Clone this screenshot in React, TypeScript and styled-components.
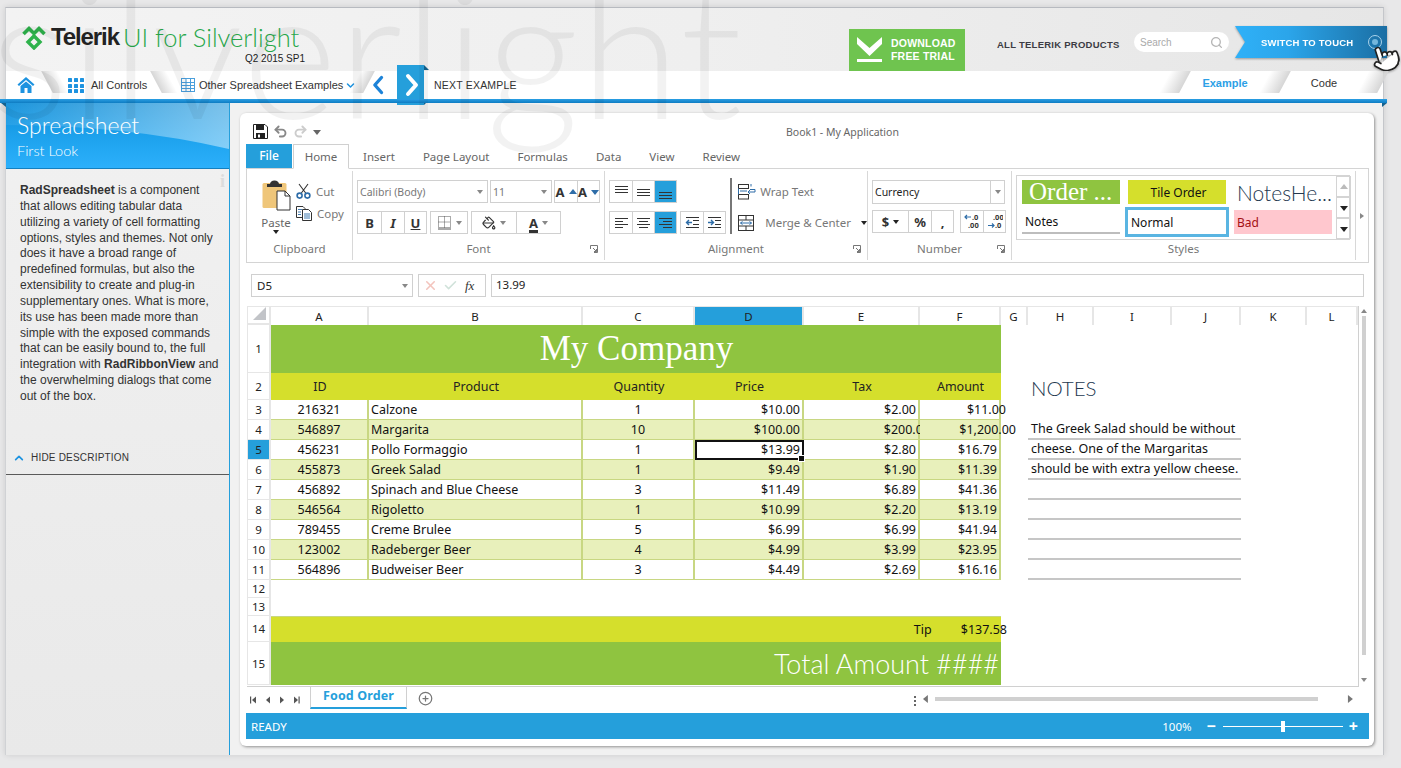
import React from 'react';
import styled, { createGlobalStyle } from 'styled-components';
import { Check, CirclePlus, PaintBucket, Pointer, Redo2, Search, Undo2, X } from 'lucide-react';

const UI_FONT = '"Noto Sans", "Open Sans", sans-serif';
const WEB_FONT = '"Liberation Sans", Arial, sans-serif';
const LIGHT_FONT = 'Lato, "Open Sans", sans-serif';
const BLUE = '#259fdb';

const GlobalStyle = createGlobalStyle`
  html, body {
    margin: 0;
    padding: 0;
    background: #e8e8e9;
  }
  * {
    box-sizing: border-box;
  }
`;

const Page = styled.div`
  position: relative;
  width: 1401px;
  height: 768px;
  overflow: hidden;
  padding: 7px 0 0 5px;
  font-family: ${UI_FONT};
  background: #e8e8e9;
`;

const Watermark = styled.div`
  position: absolute;
  left: -9px;
  top: -60px;
  font-family: ${LIGHT_FONT};
  font-weight: 300;
  font-size: 182px;
  line-height: 1.2;
  letter-spacing: 1px;
  white-space: nowrap;
  color: rgba(0, 0, 0, 0.05);
  pointer-events: none;
  z-index: 5;
`;

const Frame = styled.div`
  width: 1379px;
  height: 748px;
  border-top: 1px solid #b7bac0;
  border-right: 1px solid #c4c6ca;
  border-left: 1px solid #d0d2d5;
  background: #f1f1f1;
  box-shadow: 0 0 6px rgba(0, 0, 0, 0.12);
`;

/* ---- top header ---- */

const Header = styled.header`
  display: flex;
  align-items: flex-start;
  height: 63px;
  background: linear-gradient(90deg, #f3f3f3 0%, #efefef 50%, #e6e6e6 100%);
`;

const LogoBlock = styled.div`
  display: flex;
  flex-direction: column;
  align-items: flex-end;
  width: 283px;
  margin: 14px 0 0 16px;
`;

const LogoRow = styled.div`
  display: flex;
  align-items: center;
  height: 30px;
  width: 100%;
`;

const LogoMark = styled.svg`
  width: 24px;
  height: 25px;
  flex: none;
`;

const LogoStrong = styled.span`
  margin-left: 5px;
  font-family: ${WEB_FONT};
  font-weight: 700;
  font-size: 24px;
  letter-spacing: -1.1px;
  color: #222;
`;

const LogoLight = styled.span`
  margin-left: 4px;
  font-family: ${LIGHT_FONT};
  font-weight: 300;
  font-size: 25.5px;
  white-space: nowrap;
  color: #27a84a;
`;

const Version = styled.div`
  font-family: ${WEB_FONT};
  font-size: 10px;
  line-height: 12px;
  margin-top: 1px;
  color: #222;
`;

const HeaderRight = styled.div`
  display: flex;
  align-items: flex-start;
  margin-left: auto;
  margin-right: -4px;
`;

const Download = styled.div`
  display: flex;
  align-items: center;
  gap: 9px;
  width: 116px;
  height: 42px;
  margin-top: 21px;
  padding-left: 8px;
  background: #6fc44f;
  font-family: ${WEB_FONT};
  font-weight: 700;
  font-size: 10.5px;
  line-height: 13px;
  letter-spacing: 0.2px;
  color: #fff;
`;

const ProductsLink = styled.div`
  width: 137px;
  margin: 30px 0 0 32px;
  font-family: ${WEB_FONT};
  font-weight: 700;
  font-size: 9.5px;
  line-height: 13px;
  letter-spacing: 0.25px;
  white-space: nowrap;
  color: #3c3c44;
`;

const SearchBox = styled.div`
  display: flex;
  align-items: center;
  justify-content: space-between;
  width: 95px;
  height: 20px;
  margin-top: 24px;
  padding: 0 6px;
  border-radius: 10px;
  background: #fff;
  font-family: ${WEB_FONT};
  font-size: 10px;
  color: #aaa;
`;

const TouchWrap = styled.div`
  position: relative;
  width: 152px;
  height: 32px;
  margin: 18px 0 0 6px;
  filter: drop-shadow(0 1px 1px rgba(0, 0, 0, 0.35));
`;

const TouchRibbon = styled.div`
  display: flex;
  align-items: center;
  height: 100%;
  padding-left: 26px;
  clip-path: polygon(0 0, 100% 0, 100% 100%, 0 100%, 10px 50%);
  background: linear-gradient(90deg, #2fb1f8 0%, #2ba5ea 35%, #1b6ea3 100%);
  font-family: ${WEB_FONT};
  font-weight: 700;
  font-size: 9.5px;
  letter-spacing: 0.2px;
  color: #fff;
`;

const TouchRing = styled.span`
  position: absolute;
  right: 5px;
  top: 9px;
  width: 14px;
  height: 14px;
  border: 1px solid #a9d2ea;
  border-radius: 50%;
  &::after {
    content: '';
    position: absolute;
    inset: 3px;
    border-radius: 50%;
    background: #74b6dc;
  }
`;

const TouchHand = styled.span`
  position: absolute;
  left: 136px;
  top: 17px;
  transform: rotate(-18deg);
  display: block;
  height: 32px;
`;

/* ---- navigation ---- */

const NavBar = styled.nav`
  display: flex;
  align-items: center;
  height: 28px;
  background: #fff;
`;

const Slant = styled.span<{ $reverse?: boolean; $w?: number }>`
  flex: none;
  width: ${(p) => p.$w ?? 16}px;
  height: 22px;
  align-self: flex-start;
  transform: skewX(${(p) => (p.$reverse ? -28 : 28)}deg);
  background: linear-gradient(
    ${(p) => (p.$reverse ? '270deg' : '90deg')},
    #d6d6d6 0%,
    rgba(255, 255, 255, 0) 100%
  );
`;

const NavItem = styled.div<{ $w: number; $ml?: number }>`
  display: flex;
  align-items: center;
  flex: none;
  gap: 7px;
  width: ${(p) => p.$w}px;
  margin-left: ${(p) => p.$ml ?? 0}px;
  font-family: ${WEB_FONT};
  font-size: 11px;
  white-space: nowrap;
  color: #333;
`;

const NextButton = styled.div`
  position: relative;
  display: flex;
  align-items: center;
  justify-content: center;
  flex: none;
  width: 27px;
  height: 40px;
  margin: 0 0 0 8px;
  background: ${BLUE};
  &::before,
  &::after {
    content: '';
    position: absolute;
    right: -5px;
    width: 0;
    height: 0;
    border-left: 5px solid #14628f;
  }
  &::before {
    top: 0;
    border-top: 5px solid transparent;
  }
  &::after {
    bottom: 0;
    border-bottom: 5px solid transparent;
  }
`;

const NextLabel = styled.span`
  margin-left: 10px;
  font-family: ${WEB_FONT};
  font-size: 10.5px;
  letter-spacing: 0.2px;
  color: #333;
`;

const ViewTabs = styled.div`
  display: flex;
  align-items: flex-start;
  margin-left: auto;
  align-self: stretch;
`;

const ViewTab = styled.div<{ $active?: boolean; $w: number }>`
  width: ${(p) => p.$w}px;
  height: 24px;
  text-align: center;
  font-family: ${WEB_FONT};
  font-size: 11px;
  line-height: 24px;
  font-weight: ${(p) => (p.$active ? 700 : 400)};
  color: ${(p) => (p.$active ? '#2c9fe6' : '#333')};
`;

const BlueLine = styled.div`
  position: relative;
  height: 4px;
  margin: 0 -4px 0 -6px;
  background: linear-gradient(180deg, #2a9fe4 0%, #0e7cc2 100%);
  &::before,
  &::after {
    content: '';
    position: absolute;
    top: 4px;
    width: 0;
    height: 0;
    border-top: 4px solid #14628f;
  }
  &::before {
    left: 1px;
    border-left: 5px solid transparent;
  }
  &::after {
    right: 0;
    border-right: 5px solid transparent;
  }
`;

/* ---- body ---- */

const Body = styled.div`
  display: flex;
  height: 652px;
`;

const Sidebar = styled.aside`
  flex: none;
  width: 224px;
  border-right: 1px solid ${BLUE};
  background: linear-gradient(180deg, #f1f1f1 0%, #e9e9e9 100%);
`;

const SideHead = styled.div`
  position: relative;
  height: 66px;
  padding: 8px 0 0 11px;
  overflow: hidden;
  border-bottom: 1px solid #1480c0;
  background: linear-gradient(180deg, #0f8ed8 0%, #1ea3ee 55%, #2cb0fb 100%);
  color: #fff;
  font-family: ${LIGHT_FONT};
  font-weight: 300;
`;

const SideSwoosh = styled.svg`
  position: absolute;
  left: 0;
  top: 0;
  width: 223px;
  height: 66px;
`;

const SideTitle = styled.div`
  position: relative;
  font-size: 23px;
  line-height: 28px;
`;

const SideSub = styled.div`
  position: relative;
  font-size: 14.5px;
  line-height: 24px;
`;

const SideText = styled.div`
  position: relative;
  width: 201px;
  padding: 14px 0 0 14px;
  font-family: ${WEB_FONT};
  font-size: 12px;
  line-height: 15.85px;
  color: #333;
  height: 260px;
  box-sizing: content-box;
  b {
    color: #333;
  }
`;

const InfoMark = styled.span`
  position: absolute;
  right: -4px;
  top: 5px;
  font-family: "Liberation Serif", serif;
  font-weight: 700;
  font-size: 18px;
  color: #dcdcdc;
`;

const HideRow = styled.div`
  display: flex;
  align-items: center;
  gap: 7px;
  height: 24px;
  padding: 0 0 10px 8px;
  margin-top: 8px;
  border-bottom: 1px solid #5a5a5a;
  font-family: ${WEB_FONT};
  font-size: 10px;
  letter-spacing: 0.2px;
  color: #333;
`;

const Main = styled.main`
  flex: 1;
  padding: 10px 10px 9px;
`;

const Card = styled.div`
  display: flex;
  flex-direction: column;
  width: 1134px;
  height: 633px;
  padding: 0 5px 6px 6px;
  border-radius: 6px;
  background: #fff;
  box-shadow: 1px 1px 3px rgba(0, 0, 0, 0.4);
`;

const TitleRow = styled.div`
  display: flex;
  align-items: center;
  flex: none;
  height: 31px;
  padding: 6px 0 0 7px;
  gap: 5px;
`;

const DocTitle = styled.div`
  margin-left: 460px;
  font-size: 10.5px;
  color: #666;
`;

const Tabs = styled.div`
  display: flex;
  flex: none;
  height: 24px;
`;

const FileTab = styled.div`
  width: 46px;
  margin-right: 1px;
  text-align: center;
  font-size: 12px;
  font-weight: 500;
  line-height: 24px;
  background: ${BLUE};
  color: #fff;
`;

const Tab = styled.div<{ $active?: boolean }>`
  padding: 0 ${(p) => (p.$active ? 10 : 13)}px;
  width: ${(p) => (p.$active ? '56px' : 'auto')};
  font-size: 11.5px;
  line-height: 24px;
  text-align: center;
  white-space: nowrap;
  color: #666;
  border: 1px solid ${(p) => (p.$active ? '#d0d0d0' : 'transparent')};
  border-bottom-color: ${(p) => (p.$active ? '#fff' : 'transparent')};
  height: 25px;
  position: relative;
  z-index: 1;
  padding-top: 0;
`;

const Ribbon = styled.div`
  display: flex;
  flex: none;
  height: 95px;
  border: 1px solid #d4d4d4;
`;

const Group = styled.section<{ $w: number; $last?: boolean }>`
  position: relative;
  display: flex;
  flex-direction: column;
  flex: none;
  width: ${(p) => p.$w}px;
  margin: 2px 0;
  border-right: ${(p) => (p.$last ? 'none' : '1px solid #d8d8d8')};
`;

const GroupBody = styled.div<{ $pl?: number }>`
  display: flex;
  flex: 1;
  padding: 9px 0 0 ${(p) => p.$pl ?? 4}px;
`;

const GroupLabel = styled.div`
  height: 20px;
  text-align: center;
  font-size: 11.5px;
  line-height: 17px;
  color: #777;
`;

const Launcher = styled.svg`
  position: absolute;
  right: 6px;
  bottom: 7px;
  width: 8px;
  height: 8px;
`;

const Stack = styled.div<{ $gap?: number; $w?: number }>`
  display: flex;
  flex-direction: column;
  gap: ${(p) => p.$gap ?? 8}px;
  ${(p) => (p.$w ? `width: ${p.$w}px;` : '')}
`;

const ToolRow = styled.div<{ $gap?: number }>`
  display: flex;
  align-items: flex-start;
  gap: ${(p) => p.$gap ?? 3}px;
`;

const PasteBlock = styled.div`
  display: flex;
  flex-direction: column;
  align-items: center;
  width: 40px;
  margin-left: 4px;
  font-size: 11.5px;
  line-height: 14px;
  color: #666;
`;

const SmallAction = styled.div`
  display: flex;
  align-items: center;
  gap: 5px;
  height: 22px;
  font-size: 11.5px;
  color: #777;
`;

const Combo = styled.div<{ $w: number; $h?: number; $dark?: boolean }>`
  display: flex;
  align-items: center;
  justify-content: space-between;
  width: ${(p) => p.$w}px;
  height: ${(p) => p.$h ?? 23}px;
  padding-left: ${(p) => (p.$dark ? 2 : 2)}px;
  border: 1px solid #d0d0d0;
  font-size: 10.5px;
  color: ${(p) => (p.$dark ? '#222' : '#777')};
  white-space: nowrap;
`;

const ComboArrow = styled.span<{ $sep?: boolean }>`
  display: flex;
  align-items: center;
  justify-content: center;
  align-self: stretch;
  width: 14px;
  ${(p) => (p.$sep ? 'border-left: 1px solid #d0d0d0;' : '')}
  &::after {
    content: '';
    border-left: 3px solid transparent;
    border-right: 3px solid transparent;
    border-top: 4px solid #888;
  }
`;

const ToolGroup = styled.div`
  display: flex;
  height: 23px;
  border: 1px solid #d0d0d0;
`;

const ToolBtn = styled.div<{ $w?: number; $active?: boolean }>`
  display: flex;
  align-items: center;
  justify-content: center;
  gap: 4px;
  width: ${(p) => p.$w ?? 22}px;
  font-size: 13px;
  font-weight: 700;
  color: #333;
  background: ${(p) => (p.$active ? BLUE : 'transparent')};
  & + & {
    border-left: 1px solid #d0d0d0;
  }
`;

const Caret = styled.span<{ $color?: string }>`
  flex: none;
  border-left: 3px solid transparent;
  border-right: 3px solid transparent;
  border-top: 4px solid ${(p) => p.$color ?? '#888'};
`;

const VDivider = styled.div`
  width: 2px;
  height: 56px;
  margin: -2px 6px 0 4px;
  background: #777;
`;

const ActionRow = styled.div`
  display: flex;
  align-items: center;
  height: 23px;
  font-size: 11.5px;
  color: #777;
  white-space: nowrap;
`;

const Gallery = styled.div`
  display: flex;
  width: 334px;
  height: 65px;
  margin-top: -5px;
  border: 1px solid #d4d4d4;
`;

const GalleryGrid = styled.div`
  display: grid;
  grid-template-columns: 98px 98px 98px;
  grid-template-rows: 24px 24px;
  column-gap: 8px;
  row-gap: 6px;
  width: 319px;
  padding: 4px 0 0 5px;
`;

const StyleItem = styled.div<{ $kind: string }>`
  position: relative;
  display: flex;
  align-items: center;
  overflow: visible;
  padding-left: 3px;
  font-size: 12px;
  white-space: nowrap;
  color: #111;
  ${(p) =>
    p.$kind === 'order' &&
    `background:#8fc440;color:#fff;font-family:"Liberation Serif",serif;font-size:25px;padding-left:7px;`}
  ${(p) => p.$kind === 'tile' && `background:#d5df2c;justify-content:center;`}
  ${(p) => p.$kind === 'head' && `font-family:${LIGHT_FONT};font-size:21px;font-weight:300;color:#24384f;`}
  ${(p) => p.$kind === 'notes' && `border-bottom:2px solid #bdbdbd;`}
  ${(p) => p.$kind === 'normal' && `outline:3px solid #5ab5e2;outline-offset:0;`}
  ${(p) => p.$kind === 'bad' && `background:#ffc7ce;color:#a50f15;`}
`;

const GalleryScroll = styled.div`
  display: flex;
  flex-direction: column;
  width: 15px;
  flex: none;
  margin-left: 4px;
`;

const GalleryBtn = styled.div`
  flex: 1;
  display: flex;
  align-items: center;
  justify-content: center;
  border: 1px solid #d4d4d4;
`;

const RibbonEdge = styled.div`
  flex: 1;
  display: flex;
  align-items: center;
  justify-content: center;
  &::after {
    content: '';
    border-top: 3px solid transparent;
    border-bottom: 3px solid transparent;
    border-left: 4px solid #888;
  }
`;

const FormulaBar = styled.div`
  display: flex;
  flex: none;
  gap: 5px;
  height: 23px;
  margin: 11px 5px 9px;
`;

const NameBox = styled.div`
  display: flex;
  align-items: center;
  justify-content: space-between;
  width: 162px;
  padding-left: 5px;
  border: 1px solid #d0d0d0;
  font-size: 11.5px;
  color: #222;
`;

const FormulaBtns = styled.div`
  display: flex;
  align-items: center;
  gap: 5px;
  width: 68px;
  padding-left: 4px;
  border: 1px solid #d0d0d0;
`;

const FxMark = styled.span`
  margin-left: 2px;
  font-family: "Liberation Serif", serif;
  font-style: italic;
  font-size: 13px;
  color: #333;
`;

const FormulaInput = styled.div`
  flex: 1;
  padding-left: 4px;
  border: 1px solid #d0d0d0;
  font-size: 11.5px;
  line-height: 20px;
  color: #222;
`;

/* ---- sheet ---- */

const SheetRow = styled.div`
  display: flex;
  flex: none;
  height: 381px;
`;

const Sheet = styled.div`
  display: grid;
  grid-template-columns: 24px 98px 214px 112px 109px 116px 81px 27px 66px 78px 69px 66px 51px;
  grid-template-rows: 19px 48px 27px repeat(9, 20px) 18px 18px 26px 43px 2px;
  flex: none;
  width: 1112px;
  height: 381px;
  margin-left: 1px;
  border-right: 1px solid #d0d0d0;
  border-bottom: 1px solid #d0d0d0;
  font-size: 12.5px;
  color: #111;
`;

const Corner = styled.div`
  display: flex;
  align-items: flex-end;
  justify-content: flex-end;
  padding: 0 3px 3px 0;
  border-right: 2px solid #e6e6e6;
  border-bottom: 2px solid #e6e6e6;
  border-top: 1px solid #e6e6e6;
  border-left: 1px solid #e6e6e6;
  &::after {
    content: '';
    border-left: 13px solid transparent;
    border-bottom: 13px solid #c2c4c8;
  }
`;

const ColHead = styled.div<{ $active?: boolean }>`
  display: flex;
  align-items: center;
  justify-content: center;
  border-top: 1px solid #e6e6e6;
  border-right: 2px solid #e6e6e6;
  font-size: 11.5px;
  color: #222;
  background: ${(p) => (p.$active ? BLUE : '#fff')};
`;

const RowHead = styled.div<{ $active?: boolean }>`
  grid-column: 1;
  display: flex;
  align-items: center;
  justify-content: center;
  border-left: 1px solid #e6e6e6;
  border-right: 2px solid #e6e6e6;
  border-bottom: 1px solid #e6e6e6;
  font-size: 11.5px;
  color: #222;
  background: ${(p) => (p.$active ? BLUE : '#fff')};
`;

const Banner = styled.div`
  grid-column: 2 / span 6;
  display: flex;
  align-items: center;
  justify-content: center;
  padding-left: 1px;
  font-family: "Liberation Serif", serif;
  font-size: 35px;
  color: #fff;
  background: #8fc440;
`;

const TitleCell = styled.div`
  display: flex;
  align-items: center;
  justify-content: center;
  background: #d5df2c;
  color: #222;
`;

type CellProps = {
  $align: 'left' | 'center' | 'right';
  $alt?: boolean;
  $over?: number;
  $selected?: boolean;
};

const Cell = styled.div<CellProps>`
  position: relative;
  display: flex;
  align-items: flex-end;
  justify-content: ${(p) =>
    p.$align === 'left' ? 'flex-start' : p.$align === 'right' ? 'flex-end' : 'center'};
  padding: 0 2px 0 2px;
  border-right: 2px solid #c8d782;
  border-bottom: 1px solid #c8d782;
  line-height: 19px;
  white-space: nowrap;
  background: ${(p) => (p.$alt ? '#e8f0bb' : '#fff')};
  ${(p) => (p.$over ? 'z-index: 2;' : '')}
  ${(p) =>
    p.$selected
      ? `outline: 2px solid #111; outline-offset: -2px; z-index: 3;
         &::after { content: ''; position: absolute; right: -3px; bottom: -3px;
         width: 5px; height: 5px; background: #111; border: 1px solid #fff; }`
      : ''}
`;

const CellText = styled.span<{ $over?: number }>`
  margin-right: ${(p) => -(p.$over ?? 0)}px;
`;

const TipBand = styled.div`
  grid-column: 2 / span 6;
  display: flex;
  align-items: center;
  justify-content: flex-end;
  gap: 29px;
  background: #d5df2c;
  border-top: 1px solid #c8d782;
  white-space: nowrap;
`;

const TipAmount = styled.span`
  margin-right: -6px;
`;

const TotalBand = styled.div`
  grid-column: 2 / span 6;
  display: flex;
  align-items: center;
  justify-content: flex-end;
  padding-right: 2px;
  font-family: ${LIGHT_FONT};
  font-weight: 300;
  font-size: 27px;
  color: #fff;
  background: #8fc440;
`;

const Notes = styled.div`
  grid-column: 9 / span 3;
  grid-row: 3 / 13;
  display: flex;
  flex-direction: column;
`;

const NotesTitle = styled.div`
  height: 47px;
  padding: 0 0 0 3px;
  font-family: ${LIGHT_FONT};
  font-weight: 300;
  font-size: 20.5px;
  line-height: 30px;
  color: #24384f;
`;

const NoteLine = styled.div`
  height: 20px;
  padding-left: 3px;
  border-bottom: 2px solid #c6c6c6;
  line-height: 18px;
  white-space: nowrap;
`;

const VScroll = styled.div`
  position: relative;
  display: flex;
  justify-content: center;
  width: 11px;
  padding-top: 10px;
`;

const VThumb = styled.div`
  width: 4px;
  height: 339px;
  background: #d0d0d0;
`;

const TriangleAt = styled.span<{ $place: 'top' | 'bottom' }>`
  position: absolute;
  left: 2px;
  ${(p) => (p.$place === 'top' ? 'top: 3px;' : 'bottom: 5px;')}
  border-left: 3px solid transparent;
  border-right: 3px solid transparent;
  ${(p) =>
    p.$place === 'top' ? 'border-bottom: 4px solid #888;' : 'border-top: 4px solid #888;'}
`;

const SheetBar = styled.div`
  display: flex;
  align-items: flex-start;
  flex: none;
  height: 26px;
`;

const SheetNav = styled.div`
  display: flex;
  align-items: center;
  justify-content: space-between;
  width: 58px;
  height: 25px;
  padding: 0 4px 0 4px;
  margin-top: 0;
`;

const SheetTab = styled.div`
  width: 97px;
  height: 23px;
  margin: -1px 0 0 6px;
  border: 1px solid #d0d0d0;
  border-top: none;
  border-bottom: 2px solid ${BLUE};
  text-align: center;
  font-size: 12.5px;
  font-weight: 700;
  line-height: 20px;
  letter-spacing: 0.1px;
  color: ${BLUE};
`;

const AddSheet = styled.div`
  display: flex;
  align-items: center;
  height: 22px;
  margin-left: 11px;
`;

const Dots = styled.div`
  display: flex;
  flex-direction: column;
  gap: 2px;
  margin: 9px 0 0 481px;
  span {
    width: 2px;
    height: 2px;
    background: #666;
  }
`;

const HScroll = styled.div`
  display: flex;
  align-items: center;
  width: 432px;
  height: 24px;
  margin-left: 6px;
`;

const HThumb = styled.div`
  width: 392px;
  height: 4px;
  margin: 0 28px 0 5px;
  background: #d0d0d0;
`;

const StatusBar = styled.footer`
  display: flex;
  align-items: center;
  flex: none;
  height: 26px;
  padding: 0 11px 0 5px;
  background: ${BLUE};
  font-size: 11.5px;
  color: #fff;
`;

const ZoomLabel = styled.span`
  margin-left: auto;
  margin-right: 15px;
`;

const ZoomGlyph = styled.span`
  font-size: 16px;
  font-weight: 700;
  line-height: 16px;
`;

const ZoomTrack = styled.div`
  position: relative;
  width: 120px;
  height: 1px;
  margin: 0 6px 0 7px;
  background: #fff;
`;

const ZoomThumb = styled.span`
  position: absolute;
  left: 58px;
  top: -5px;
  width: 4px;
  height: 11px;
  background: #fff;
`;

/* ---- drawings ---- */

const Chevron = ({ dir, color, size = 18, w = 3.4 }: { dir: 'l' | 'r' | 'u' | 'd'; color: string; size?: number; w?: number }) => {
  const pts = { l: '15,3 7,12 15,21', r: '9,3 17,12 9,21', u: '4,16 12,8 20,16', d: '4,8 12,16 20,8' }[dir];
  return (
    <svg width={size} height={size} viewBox="0 0 24 24">
      <polyline points={pts} fill="none" stroke={color} strokeWidth={w} strokeLinecap="round" strokeLinejoin="round" />
    </svg>
  );
};

const TelerikMark = () => (
  <LogoMark viewBox="0 0 24 25">
    <polyline points="1.5,9 7,3.5 12,8.5 17,3.5 22.5,9" fill="none" stroke="#2eb24b" strokeWidth="3.6" />
    <polygon points="12,11 18,17 12,23 6,17" fill="none" stroke="#2eb24b" strokeWidth="3.4" />
  </LogoMark>
);

const HomeIcon = () => (
  <svg width="18" height="18" viewBox="0 0 18 18">
    <path d="M9 1 L0.5 8.5 L2 10 L9 4 L16 10 L17.5 8.5 Z" fill="#1d93e0" />
    <path d="M3.5 10 L9 5.5 L14.5 10 V17 H10.5 V12 H7.5 V17 H3.5 Z" fill="#1d93e0" />
  </svg>
);

const AppsIcon = () => (
  <svg width="16" height="16" viewBox="0 0 16 16" fill="#1d93e0">
    {[0, 6, 12].flatMap((x) =>
      [1, 7, 12].map((y) => <rect key={`${x}-${y}`} x={x} y={y} width="4" height="4" rx="0.6" />),
    )}
  </svg>
);

const TableIcon = () => (
  <svg width="14" height="14" viewBox="0 0 14 14" fill="none" stroke="#4b9fdc">
    <rect x="0.5" y="0.5" width="13" height="13" />
    <path d="M5 0.5V13.5M9.5 0.5V13.5M0.5 4.5H13.5M0.5 7.5H13.5M0.5 10.5H13.5" />
  </svg>
);

const DownloadMark = () => (
  <svg width="25" height="26" viewBox="0 0 25 26" fill="#fff">
    <path d="M0 0 L12.5 11 L25 0 V7 L12.5 19 L0 7 Z" />
    <rect y="22" width="25" height="3" />
  </svg>
);

const SaveIcon = () => (
  <svg width="15" height="15" viewBox="0 0 15 15">
    <path d="M0.5 0.5 H12 L14.5 3 V14.5 H0.5 Z" fill="#fff" stroke="#222" />
    <rect x="3" y="1" width="8" height="5" fill="#222" />
    <rect x="3" y="9" width="9" height="5" fill="#222" />
    <rect x="5" y="10.5" width="2" height="3" fill="#fff" />
  </svg>
);

const PasteIcon = () => (
  <svg width="29" height="31" viewBox="0 0 29 31">
    <rect x="0.5" y="3" width="24" height="25" rx="1.5" fill="#efc67a" />
    <path d="M5 4 H8 Q8.5 0.5 12.5 0.5 Q16.5 0.5 17 4 H20 V7 H5 Z" fill="#333" />
    <path d="M15 11 H23 L28 16 V30 H15 Z" fill="#fff" stroke="#333" />
    <path d="M23 11 V16 H28" fill="none" stroke="#333" />
  </svg>
);

const CutIcon = () => (
  <svg width="15" height="16" viewBox="0 0 15 16" fill="none">
    <path d="M3 1 L10 10.5 M12 1 L5 10.5" stroke="#333" strokeWidth="1.1" />
    <circle cx="3.6" cy="12.6" r="2.5" stroke="#2e6da8" strokeWidth="1.6" />
    <circle cx="11.4" cy="12.6" r="2.5" stroke="#2e6da8" strokeWidth="1.6" />
  </svg>
);

const CopyIcon = () => (
  <svg width="16" height="15" viewBox="0 0 16 15" fill="#fff" stroke="#333">
    <path d="M0.5 0.5 H7 L9 2.5 V11.5 H0.5 Z" />
    <path d="M6.5 3.5 H12.5 L15.5 6.5 V14.5 H6.5 Z" />
    <path d="M2 3.5H6M2 6H5M2 8.5H5M8 8H14M8 10H14M8 12H14" stroke="#2e6da8" strokeWidth="0.9" />
  </svg>
);

const Lines = ({ rows, color = '#333' }: { rows: [number, number, number][]; color?: string }) => (
  <svg width="15" height="15" viewBox="0 0 15 15" stroke={color} strokeWidth="1">
    {rows.map(([x1, x2, y]) => (
      <line key={`${x1}-${y}`} x1={x1} x2={x2} y1={y + 0.5} y2={y + 0.5} />
    ))}
  </svg>
);

const vTop: [number, number, number][] = [[1, 14, 2], [1, 14, 5], [1, 14, 8]];
const vMid: [number, number, number][] = [[1, 14, 5], [1, 14, 8], [1, 14, 11]];
const vBot: [number, number, number][] = [[1, 14, 8], [1, 14, 11], [1, 14, 14]];
const hLeft: [number, number, number][] = [[1, 14, 3], [1, 9, 6], [1, 14, 9], [1, 9, 12]];
const hCenter: [number, number, number][] = [[1, 14, 3], [3, 12, 6], [1, 14, 9], [3, 12, 12]];
const hRight: [number, number, number][] = [[1, 14, 3], [5, 14, 6], [1, 14, 9], [5, 14, 12]];

const IndentIcon = ({ out }: { out?: boolean }) => (
  <svg width="15" height="15" viewBox="0 0 15 15" fill="none">
    <path d="M1 2.5H14M8 5.5H14M8 9.5H14M1 12.5H14" stroke="#333" />
    <path d={out ? 'M7 7.5H1.5M4 5L1.5 7.5L4 10' : 'M1 7.5H6.5M4 5L6.5 7.5L4 10'} stroke="#2e6da8" strokeWidth="1.4" />
  </svg>
);

const BordersIcon = () => (
  <svg width="15" height="15" viewBox="0 0 15 15" fill="none" stroke="#555" strokeDasharray="1 1">
    <rect x="1.5" y="1.5" width="12" height="11" />
    <path d="M7.5 1.5V12.5M1.5 7H13.5" />
    <path d="M1 14H14" strokeDasharray="none" />
  </svg>
);

const WrapIcon = () => (
  <svg width="18" height="16" viewBox="0 0 18 16" fill="none">
    <rect x="0.5" y="0.5" width="10" height="4" stroke="#333" />
    <rect x="0.5" y="10.5" width="10" height="4.5" stroke="#333" />
    <path d="M0.5 4.5V10.5M2 7H9M13 2.5V0M12 5.5H17V8H10M12 6L10 8L12 10" stroke="#2e6da8" />
  </svg>
);

const MergeIcon = () => (
  <svg width="16" height="16" viewBox="0 0 16 16" fill="none">
    <rect x="0.5" y="0.5" width="15" height="15" stroke="#333" />
    <path d="M0.5 5H15.5M0.5 11H15.5M8 0.5V5M8 11V15.5" stroke="#333" />
    <path d="M2.5 8H13.5M4.5 6.5L2.5 8L4.5 9.5M11.5 6.5L13.5 8L11.5 9.5" stroke="#2e6da8" />
  </svg>
);

const DecimalIcon = ({ less }: { less?: boolean }) => (
  <svg width="16" height="17" viewBox="0 0 16 17">
    <text x={less ? 8 : 6} y="6.5" fontSize="7.5" fontFamily={UI_FONT} fill="#333">{less ? '.0' : '.00'}</text>
    <text x={less ? 4 : 8} y="15" fontSize="7.5" fontFamily={UI_FONT} fill="#333">{less ? '.00' : '.0'}</text>
    <path
      d={less ? 'M1 4H7M3 2L1 4L3 6' : 'M1 12.5H7M5 10.5L7 12.5L5 14.5'}
      fill="none"
      stroke="#2e6da8"
      strokeWidth="1.2"
    />
  </svg>
);

const LauncherMark = () => (
  <Launcher viewBox="0 0 8 8" fill="none" stroke="#777">
    <path d="M0.5 4V0.5H7.5V7.5H4" />
    <path d="M3 3L6.5 6.5M4 6.5H6.5V4" />
  </Launcher>
);

const NavGlyph = ({ kind }: { kind: 'first' | 'prev' | 'next' | 'last' }) => {
  const left = kind === 'first' || kind === 'prev';
  const bar = kind === 'first' || kind === 'last';
  return (
    <svg width="7" height="8" viewBox="0 0 7 8" fill="#555">
      <polygon points={left ? '6,0.5 2,4 6,7.5' : '1,0.5 5,4 1,7.5'} />
      {bar && <rect x={left ? 0 : 5.5} y="0.5" width="1.2" height="7" />}
    </svg>
  );
};

const Triangle = ({ dir, color }: { dir: 'u' | 'd' | 'l' | 'r'; color: string }) => {
  const pts = { u: '0,6 4,1 8,6', d: '0,2 8,2 4,7', l: '6,0 6,8 1,4', r: '2,0 2,8 7,4' }[dir];
  return (
    <svg width="8" height="8" viewBox="0 0 8 8" fill={color}>
      <polygon points={pts} />
    </svg>
  );
};

const Swoosh = () => (
  <SideSwoosh viewBox="0 0 223 66" preserveAspectRatio="none">
    <defs>
      <linearGradient id="sw" x1="0" x2="1" y1="0" y2="0">
        <stop offset="0" stopColor="#ffffff" stopOpacity="0.06" />
        <stop offset="1" stopColor="#ffffff" stopOpacity="0.45" />
      </linearGradient>
    </defs>
    <path d="M0 0 H223 V46 Q120 22 0 22 Z" fill="url(#sw)" />
  </SideSwoosh>
);

/* ---- data ---- */

type Row = { id: string; product: string; qty: string; price: string; tax: string; amount: string; taxOver?: number; amountOver?: number };

const ROWS: Row[] = [
  { id: '216321', product: 'Calzone', qty: '1', price: '$10.00', tax: '$2.00', amount: '$11.00', amountOver: 9 },
  { id: '546897', product: 'Margarita', qty: '10', price: '$100.00', tax: '$200.00', amount: '$1,200.00', taxOver: 14, amountOver: 19 },
  { id: '456231', product: 'Pollo Formaggio', qty: '1', price: '$13.99', tax: '$2.80', amount: '$16.79' },
  { id: '455873', product: 'Greek Salad', qty: '1', price: '$9.49', tax: '$1.90', amount: '$11.39' },
  { id: '456892', product: 'Spinach and Blue Cheese', qty: '3', price: '$11.49', tax: '$6.89', amount: '$41.36' },
  { id: '546564', product: 'Rigoletto', qty: '1', price: '$10.99', tax: '$2.20', amount: '$13.19' },
  { id: '789455', product: 'Creme Brulee', qty: '5', price: '$6.99', tax: '$6.99', amount: '$41.94' },
  { id: '123002', product: 'Radeberger Beer', qty: '4', price: '$4.99', tax: '$3.99', amount: '$23.95' },
  { id: '564896', product: 'Budweiser Beer', qty: '3', price: '$4.49', tax: '$2.69', amount: '$16.16' },
];

const COLUMNS = ['A', 'B', 'C', 'D', 'E', 'F', 'G', 'H', 'I', 'J', 'K', 'L'];
const TITLES = ['ID', 'Product', 'Quantity', 'Price', 'Tax', 'Amount'];
const NOTE_LINES = [
  'The Greek Salad should be without',
  'cheese. One of the Margaritas',
  'should be with extra yellow cheese.',
  '',
  '',
  '',
  '',
  '',
];
const RIBBON_TABS = ['Insert', 'Page Layout', 'Formulas', 'Data', 'View', 'Review'];

function SheetGrid() {
  return (
    <Sheet>
      <Corner />
      {COLUMNS.map((c) => (
        <ColHead key={c} $active={c === 'D'}>{c}</ColHead>
      ))}

      <RowHead>1</RowHead>
      <Banner>My Company</Banner>

      <RowHead>2</RowHead>
      {TITLES.map((t) => (
        <TitleCell key={t}>{t}</TitleCell>
      ))}

      {ROWS.map((r, i) => {
        const alt = i % 2 === 1;
        return (
          <React.Fragment key={r.id}>
            <RowHead $active={i === 2}>{i + 3}</RowHead>
            <Cell $align="center" $alt={alt}>{r.id}</Cell>
            <Cell $align="left" $alt={alt}>{r.product}</Cell>
            <Cell $align="center" $alt={alt}>{r.qty}</Cell>
            <Cell $align="right" $alt={alt} $selected={i === 2}>{r.price}</Cell>
            <Cell $align="right" $alt={alt} $over={r.taxOver}>
              <CellText $over={r.taxOver}>{r.tax}</CellText>
            </Cell>
            <Cell $align="right" $alt={alt} $over={r.amountOver}>
              <CellText $over={r.amountOver}>{r.amount}</CellText>
            </Cell>
          </React.Fragment>
        );
      })}

      <RowHead>12</RowHead>
      <RowHead>13</RowHead>
      <RowHead>14</RowHead>
      <TipBand>
        <span>Tip</span>
        <TipAmount>$137.58</TipAmount>
      </TipBand>
      <RowHead>15</RowHead>
      <TotalBand>Total Amount ####</TotalBand>

      <Notes>
        <NotesTitle>NOTES</NotesTitle>
        {NOTE_LINES.map((line, i) => (
          <NoteLine key={i}>{line}</NoteLine>
        ))}
      </Notes>
    </Sheet>
  );
}

function RibbonPanel() {
  return (
    <Ribbon>
      <Group $w={106}>
        <GroupBody $pl={5}>
          <PasteBlock>
            <PasteIcon />
            <div style={{ marginTop: 5 }}>Paste</div>
            <Caret $color="#222" />
          </PasteBlock>
          <Stack $gap={0}>
            <SmallAction><CutIcon />Cut</SmallAction>
            <SmallAction><CopyIcon />Copy</SmallAction>
          </Stack>
        </GroupBody>
        <GroupLabel>Clipboard</GroupLabel>
      </Group>

      <Group $w={252}>
        <GroupBody>
          <Stack>
            <ToolRow $gap={2}>
              <Combo $w={131}>Calibri (Body)<ComboArrow /></Combo>
              <Combo $w={62}>11<ComboArrow /></Combo>
              <ToolGroup>
                <ToolBtn $w={22}>A<Triangle dir="u" color="#2e6da8" /></ToolBtn>
                <ToolBtn $w={22}>A<Triangle dir="d" color="#2e6da8" /></ToolBtn>
              </ToolGroup>
            </ToolRow>
            <ToolRow>
              <ToolGroup>
                <ToolBtn $w={23}>B</ToolBtn>
                <ToolBtn $w={23}><i>I</i></ToolBtn>
                <ToolBtn $w={22}><u>U</u></ToolBtn>
              </ToolGroup>
              <ToolGroup>
                <ToolBtn $w={36}><BordersIcon /><Caret /></ToolBtn>
              </ToolGroup>
              <ToolGroup>
                <ToolBtn $w={44}><PaintBucket size={14} color="#333" /><Caret /></ToolBtn>
                <ToolBtn $w={44}><u style={{ textDecorationThickness: 3 }}>A</u><Caret /></ToolBtn>
              </ToolGroup>
            </ToolRow>
          </Stack>
        </GroupBody>
        <GroupLabel>Font</GroupLabel>
        <LauncherMark />
      </Group>

      <Group $w={263}>
        <GroupBody>
          <Stack $w={119}>
            <ToolRow>
              <ToolGroup>
                <ToolBtn $active={false}><Lines rows={vTop} /></ToolBtn>
                <ToolBtn><Lines rows={vMid} /></ToolBtn>
                <ToolBtn $active><Lines rows={vBot} /></ToolBtn>
              </ToolGroup>
            </ToolRow>
            <ToolRow>
              <ToolGroup>
                <ToolBtn><Lines rows={hLeft} /></ToolBtn>
                <ToolBtn><Lines rows={hCenter} /></ToolBtn>
                <ToolBtn $active><Lines rows={hRight} /></ToolBtn>
              </ToolGroup>
              <ToolGroup>
                <ToolBtn><IndentIcon out /></ToolBtn>
                <ToolBtn><IndentIcon /></ToolBtn>
              </ToolGroup>
            </ToolRow>
          </Stack>
          <VDivider />
          <Stack>
            <ActionRow><WrapIcon /><span style={{ marginLeft: 4 }}>Wrap Text</span></ActionRow>
            <ActionRow>
              <MergeIcon />
              <span style={{ margin: '0 10px 0 11px' }}>Merge &amp; Center</span>
              <Caret $color="#222" />
            </ActionRow>
          </Stack>
        </GroupBody>
        <GroupLabel>Alignment</GroupLabel>
        <LauncherMark />
      </Group>

      <Group $w={144}>
        <GroupBody>
          <Stack $gap={6}>
            <Combo $w={133} $h={24} $dark>Currency<ComboArrow $sep /></Combo>
            <ToolRow $gap={6}>
              <ToolGroup>
                <ToolBtn $w={35}>$<Caret $color="#222" /></ToolBtn>
                <ToolBtn $w={23}>%</ToolBtn>
                <ToolBtn $w={22}>,</ToolBtn>
              </ToolGroup>
              <ToolGroup>
                <ToolBtn><DecimalIcon less /></ToolBtn>
                <ToolBtn><DecimalIcon /></ToolBtn>
              </ToolGroup>
            </ToolRow>
          </Stack>
        </GroupBody>
        <GroupLabel>Number</GroupLabel>
        <LauncherMark />
      </Group>

      <Group $w={344}>
        <GroupBody>
          <Gallery>
            <GalleryGrid>
              <StyleItem $kind="order">Order ...</StyleItem>
              <StyleItem $kind="tile">Tile Order</StyleItem>
              <StyleItem $kind="head">NotesHe...</StyleItem>
              <StyleItem $kind="notes">Notes</StyleItem>
              <StyleItem $kind="normal">Normal</StyleItem>
              <StyleItem $kind="bad">Bad</StyleItem>
            </GalleryGrid>
            <GalleryScroll>
              <GalleryBtn><Triangle dir="u" color="#bbb" /></GalleryBtn>
              <GalleryBtn><Triangle dir="d" color="#222" /></GalleryBtn>
              <GalleryBtn><Triangle dir="d" color="#222" /></GalleryBtn>
            </GalleryScroll>
          </Gallery>
        </GroupBody>
        <GroupLabel>Styles</GroupLabel>
      </Group>

      <RibbonEdge />
    </Ribbon>
  );
}

export default function App() {
  return (
    <Page>
      <GlobalStyle />
      <Watermark>silverlight</Watermark>
      <Frame>
        <Header>
          <LogoBlock>
            <LogoRow>
              <TelerikMark />
              <LogoStrong>Telerik</LogoStrong>
              <LogoLight>UI for Silverlight</LogoLight>
            </LogoRow>
            <Version>Q2 2015 SP1</Version>
          </LogoBlock>
          <HeaderRight>
            <Download>
              <DownloadMark />
              <div>DOWNLOAD<br />FREE TRIAL</div>
            </Download>
            <ProductsLink>ALL TELERIK PRODUCTS</ProductsLink>
            <SearchBox>
              Search
              <Search size={13} color="#b5b5b5" strokeWidth={2.4} />
            </SearchBox>
            <TouchWrap>
              <TouchRibbon>SWITCH TO TOUCH</TouchRibbon>
              <TouchRing />
              <TouchHand><Pointer size={30} fill="#fff" color="#222" strokeWidth={1.3} /></TouchHand>
            </TouchWrap>
          </HeaderRight>
        </Header>

        <NavBar>
          <NavItem $w={30} $ml={11}><HomeIcon /></NavItem>
          <Slant />
          <NavItem $w={88} $ml={5}><AppsIcon />All Controls</NavItem>
          <Slant />
          <NavItem $w={165} $ml={9} style={{ gap: 4 }}><TableIcon />Other Spreadsheet Examples</NavItem>
          <Chevron dir="d" color="#1d93e0" size={9} w={4} />
          <Slant $reverse $w={14} />
          <Chevron dir="l" color="#1d83d8" size={20} w={4} />
          <NextButton><Chevron dir="r" color="#fff" size={24} w={4} /></NextButton>
          <NextLabel>NEXT EXAMPLE</NextLabel>
          <ViewTabs>
            <Slant $reverse $w={20} />
            <ViewTab $active $w={80}>Example</ViewTab>
            <Slant $reverse $w={20} />
            <ViewTab $w={78}>Code</ViewTab>
            <Slant $reverse $w={20} />
          </ViewTabs>
        </NavBar>
        <BlueLine />

        <Body>
          <Sidebar>
            <SideHead>
              <Swoosh />
              <SideTitle>Spreadsheet</SideTitle>
              <SideSub>First Look</SideSub>
            </SideHead>
            <SideText>
              <InfoMark>i</InfoMark>
              <b>RadSpreadsheet</b> is a component that allows editing tabular data utilizing a variety of cell
              formatting options, styles and themes. Not only does it have a broad range of predefined formulas,
              but also the extensibility to create and plug-in supplementary ones. What is more, its use has been
              made more than simple with the exposed commands that can be easily bound to, the full integration
              with <b>RadRibbonView</b> and the overwhelming dialogs that come out of the box.
            </SideText>
            <HideRow>
              <Chevron dir="u" color="#1d93e0" size={10} w={4} />
              HIDE DESCRIPTION
            </HideRow>
          </Sidebar>

          <Main>
            <Card>
              <TitleRow>
                <SaveIcon />
                <Undo2 size={15} color="#888" strokeWidth={3} />
                <Redo2 size={15} color="#ccc" strokeWidth={3} />
                <Triangle dir="d" color="#666" />
                <DocTitle>Book1 - My Application</DocTitle>
              </TitleRow>
              <Tabs>
                <FileTab>File</FileTab>
                <Tab $active>Home</Tab>
                {RIBBON_TABS.map((t) => (
                  <Tab key={t}>{t}</Tab>
                ))}
              </Tabs>
              <RibbonPanel />
              <FormulaBar>
                <NameBox>D5<ComboArrow /></NameBox>
                <FormulaBtns>
                  <X size={15} color="#f3c4bd" strokeWidth={2.5} />
                  <Check size={15} color="#d0e2da" strokeWidth={2.5} />
                  <FxMark>fx</FxMark>
                </FormulaBtns>
                <FormulaInput>13.99</FormulaInput>
              </FormulaBar>
              <SheetRow>
                <SheetGrid />
                <VScroll>
                  <TriangleAt $place="top" />
                  <VThumb />
                  <TriangleAt $place="bottom" />
                </VScroll>
              </SheetRow>
              <SheetBar>
                <SheetNav>
                  <NavGlyph kind="first" />
                  <NavGlyph kind="prev" />
                  <NavGlyph kind="next" />
                  <NavGlyph kind="last" />
                </SheetNav>
                <SheetTab>Food Order</SheetTab>
                <AddSheet><CirclePlus size={15} color="#777" /></AddSheet>
                <Dots><span /><span /><span /></Dots>
                <HScroll>
                  <Triangle dir="l" color="#777" />
                  <HThumb />
                  <Triangle dir="r" color="#777" />
                </HScroll>
              </SheetBar>
              <StatusBar>
                READY
                <ZoomLabel>100%</ZoomLabel>
                <ZoomGlyph>−</ZoomGlyph>
                <ZoomTrack><ZoomThumb /></ZoomTrack>
                <ZoomGlyph>+</ZoomGlyph>
              </StatusBar>
            </Card>
          </Main>
        </Body>
      </Frame>
    </Page>
  );
}
